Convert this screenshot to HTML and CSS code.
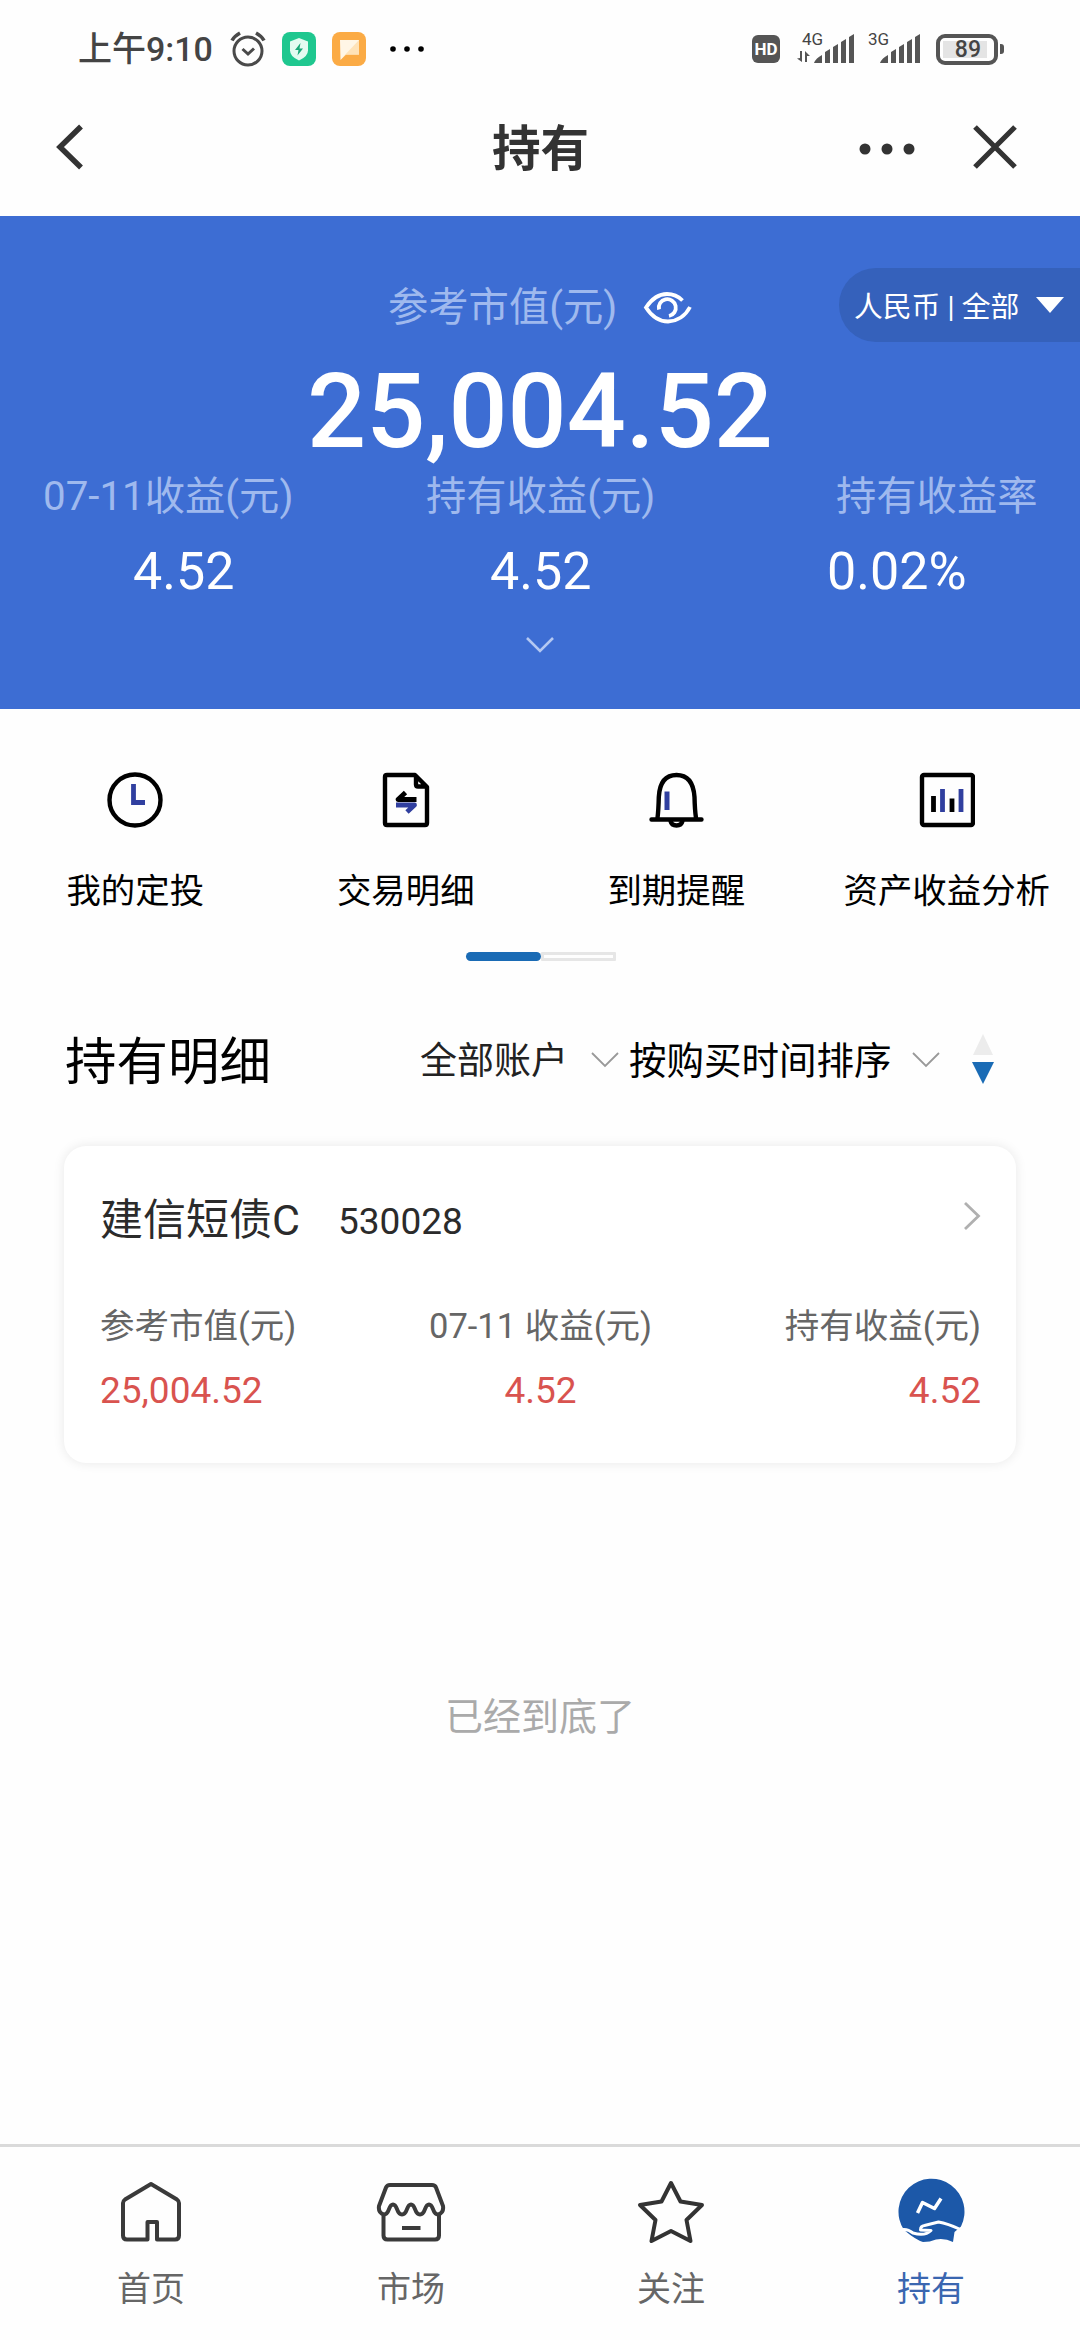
FILE: index.html
```html
<!DOCTYPE html>
<html lang="zh-CN">
<head>
<meta charset="utf-8">
<title>持有</title>
<link rel="stylesheet" href="styles.css">
</head>
<body>
<div class="screen">
  <div class="status">
    <span class="time">上午9:10</span>
    <svg class="alarm" width="36" height="36" viewBox="0 0 36 36" fill="none" stroke="#4a4a4a" stroke-width="3"><circle cx="18" cy="20" r="14"/><path d="M12.500 18l5.500 5 6-5.500" /><path d="M2 9.500Q4.500 5 10 2M34 9.500Q31.500 5 26 2" stroke-width="3.600"/></svg>
    <svg class="guard" width="34" height="34" viewBox="0 0 34 34"><rect width="34" height="34" rx="8" fill="#1fc78f"/><path d="M17 6l9 3.500v9q0 6-9 10-9-4-9-10v-9z" fill="#e4fbf1"/><path d="M18.500 11l-5.500 7h3.500l-1 5.500 5.500-7h-3.500z" fill="#1aa878"/></svg>
    <svg class="chat" width="34" height="34" viewBox="0 0 34 34"><rect width="34" height="34" rx="8" fill="#fbab45"/><path d="M8 8h19v14.500H14L8.500 28z" fill="#fff6e6"/><path d="M27 8v14.500H14L10 26z" fill="#ffe3b8"/></svg>
    <svg class="more" width="34" height="8" viewBox="0 0 34 8"><circle cx="3" cy="4" r="2.800"/><circle cx="17" cy="4" r="2.800"/><circle cx="31" cy="4" r="2.800"/></svg>
    <span class="hd">HD</span>
    <div class="net net-a"><span class="gen">4G</span>
      <svg width="58" height="30" viewBox="0 0 58 30" fill="#555"><path d="M0 24.500l5 3.500V17H3v7zM8 28V17l5 5h-3v6zM17 29q2-5 8-8v8zM28 29V18l5-3v14zM36 29V13l5-3v19zM44 29V8l5-3v24zM52 29V3l5-3v29z"/></svg></div>
    <div class="net net-b"><span class="gen">3G</span>
      <svg width="58" height="30" viewBox="0 0 58 30" fill="#555"><path d="M17 29q2-5 8-8v8zM28 29V18l5-3v14zM36 29V13l5-3v19zM44 29V8l5-3v24zM52 29V3l5-3v29z"/></svg></div>
    <span class="battery"><span class="level">89</span></span><span class="nub"></span>
  </div>

  <header class="nav">
    <svg class="back" width="28" height="46" viewBox="0 0 28 46" fill="none" stroke="#333" stroke-width="5.500"><path d="M25 2.500L4 23l21 20.500"/></svg>
    <h1>持有</h1>
    <svg class="dots" width="56" height="12" viewBox="0 0 56 12" fill="#333"><circle cx="6" cy="6" r="5.500"/><circle cx="28" cy="6" r="5.500"/><circle cx="50" cy="6" r="5.500"/></svg>
    <svg class="close" width="44" height="44" viewBox="0 0 44 44" stroke="#333" stroke-width="5.200"><path d="M2 2l40 40M42 2L2 42"/></svg>
  </header>

  <section class="summary">
    <div class="total-label"><span>参考市值(元)</span>
      <svg width="50" height="32" viewBox="0 0 50 32" fill="none" stroke="#fff" stroke-width="3.800"><path d="M39.500 8.500Q33 2 24 2 12 2 3 15.500 12 29.500 25 29.500q15-1 22-14.500"/><path d="M16 17.500a8.500 8.500 0 1 1 10 6.500"/></svg>
    </div>
    <div class="currency"><span>人民币 | 全部</span><i class="tri"></i></div>
    <div class="total">25,004.52</div>
    <div class="metrics">
      <div class="metric m1"><span>07-11收益(元)</span><b>4.52</b></div>
      <div class="metric m2"><span>持有收益(元)</span><b>4.52</b></div>
      <div class="metric m3"><span>持有收益率</span><b>0.02%</b></div>
    </div>
    <svg class="expand" width="30" height="18" viewBox="0 0 30 18" fill="none" stroke="#b4c8f2" stroke-width="2.600"><path d="M2 2l13 13L28 2"/></svg>
  </section>

  <nav class="shortcuts">
    <a><svg width="56" height="56" viewBox="0 0 56 56" fill="none" stroke="#000" stroke-width="4.400"><circle cx="28" cy="28" r="25.500"/><path d="M26.500 12v18.500H38" stroke="#303f9f" stroke-width="4.800"/></svg>我的定投</a>
    <a><svg width="56" height="56" viewBox="0 0 56 56" fill="none" stroke="#000" stroke-width="4.400" stroke-linejoin="round"><path d="M37 3H9Q7 3 7 5v46q0 2 2 2h38q2 0 2-2V15zM38 4v8.500q0 2 2 2h8"/><path d="M38.500 27.500H20l7.500-7" stroke-width="4.800"/><path d="M18 33h18.500l-7.500 7" stroke="#303f9f" stroke-width="4.800"/></svg>交易明细</a>
    <a><svg width="56" height="56" viewBox="0 0 56 56" fill="none" stroke="#000" stroke-width="4.400" stroke-linecap="round"><path d="M3.500 47.500h50M9.500 46q1-8 1.300-21Q12 3 28.500 3T46.500 25q.3 13 1.500 21M22.500 49q1 4.500 6 4.500t6-4.500"/><path d="M19 19.500V38" stroke="#303f9f" stroke-width="5" stroke-linecap="butt"/></svg>到期提醒</a>
    <a><svg width="56" height="56" viewBox="0 0 56 56" fill="none" stroke="#000" stroke-width="4.400"><rect x="3" y="3" width="51" height="50" rx="2"/><path d="M14.500 24v16M33 26.500V40" stroke-width="4.800"/><path d="M23.500 17v23M42 17v23" stroke="#303f9f" stroke-width="4.800"/></svg>资产收益分析</a>
  </nav>
  <div class="pager"><i></i><i></i></div>

  <div class="list-head">
    <h2>持有明细</h2>
    <span class="filter">全部账户</span>
    <svg class="chev c1" width="28" height="16" viewBox="0 0 28 16"><path d="M1 1l13 13L27 1"/></svg>
    <span class="sort">按购买时间排序</span>
    <svg class="chev c2" width="28" height="16" viewBox="0 0 28 16"><path d="M1 1l13 13L27 1"/></svg>
    <svg class="order" width="22" height="50" viewBox="0 0 22 50"><path d="M11 0l10 21H1z" fill="#ececec"/><path d="M0 28h22L11 50z" fill="#1a6bb5"/></svg>
  </div>

  <article class="card">
    <div class="fund"><span class="name">建信短债C</span><span class="code">530028</span>
      <svg width="18" height="30" viewBox="0 0 18 30" fill="none" stroke="#b0b0b0" stroke-width="2.800"><path d="M2 2l13.500 13L2 28"/></svg></div>
    <div class="cells">
      <div><span>参考市值(元)</span><b>25,004.52</b></div>
      <div><span>07-11 收益(元)</span><b>4.52</b></div>
      <div><span>持有收益(元)</span><b>4.52</b></div>
    </div>
  </article>
  <p class="end">已经到底了</p>

  <footer class="tabs">
    <a><svg width="70" height="66" viewBox="0 0 70 66" fill="none" stroke="#3a3a3a" stroke-width="4" stroke-linejoin="round"><path d="M31.500 61.500H11q-4 0-4-4V25q0-2 2-3.500L35 6l26 15.500q2 1.500 2 3.500v32.500q0 4-4 4H41V44h-9.500z"/></svg>首页</a>
    <a><svg width="70" height="66" viewBox="0 0 70 66" fill="none" stroke="#3a3a3a" stroke-width="4"><path d="M14 7h42q3 0 4 2.500L67 28q1 7-5 8.500c-6 0-4-10-9-10s-3 10-9 10-4-10-9-10-3 10-9 10-4-10-9-10-3 10-9 10Q2 35 3 28l7-18.500Q11 7 14 7z"/><path d="M7.500 36v21.500q0 4 4 4h47.500q4 0 4-4V36M26 50h18.500"/></svg>市场</a>
    <a><svg width="70" height="66" viewBox="0 0 70 66" fill="none" stroke="#333" stroke-width="4" stroke-linejoin="round"><path d="M35 5l9.500 18.500L66 27 50.500 42 54.500 63 35 53 15.500 63l4-21L4 27l21.500-3.500z"/></svg>关注</a>
    <a class="active"><svg width="70" height="66" viewBox="0 0 70 66" fill="none"><path d="M8 52A33 33 0 1 1 65 48.500L58.500 54 57 64q-8-4-17-2.500-6 2.500-13 2.500-7-2-19-12z" fill="#1c58a8"/><path d="M21.500 35l5-10.500 12 6L45 20.500" stroke="#fff" stroke-width="3.500" stroke-linejoin="round"/><path d="M7 51.500q5-.5 10 3.500 12 3.500 18-2.500l-10.500-.5q0-4 4-4.500l14-3.500q9 1.500 22 7.500" stroke="#fff" stroke-width="3" stroke-linejoin="round"/></svg>持有</a>
  </footer>
</div>
</body>
</html>
```
FILE: styles.css
```css
* { box-sizing: border-box; }
body { margin: 0; background: #fefefe; font-family: Roboto, "Noto Sans CJK SC", sans-serif; }
svg { display: block; flex: none; }
b, h1, h2, p { margin: 0; font-weight: 400; }
span, h1 { white-space: nowrap; }
.screen { width: 1080px; height: 2340px; display: flex; flex-direction: column; background: #fefefe; overflow: hidden; }

.status { height: 98px; display: flex; align-items: center; padding-left: 78px; color: #444; flex: none; }
.time { font-size: 34px; width: 152px; flex: none; font-weight: 500; line-height: 40px; }
.alarm { margin-right: 16px; }
.guard { margin-right: 16px; }
.chat { margin-right: 24px; }
.hd { margin-left: 328px; width: 28px; height: 28px; border-radius: 6px; background: #555; color: #fff; font: 700 17px/29px Roboto, sans-serif; text-align: center; }
.net { position: relative; width: 58px; }
.net-a { margin-left: 17px; }
.net-b { margin-left: 8px; }
.gen { position: absolute; left: 5px; top: -5px; font-size: 17px; line-height: 20px; }
.battery { margin-left: 15px; width: 62px; height: 31px; border: 4px solid #555; border-radius: 9px; padding: 3px; }
.level { display: block; width: 44px; height: 17px; background: #e4e4e4; font-size: 23px; line-height: 18px; font-weight: 500; text-align: right; padding-right: 6px; }
.nub { width: 4px; height: 10px; margin-left: 2px; background: #555; border-radius: 0 3px 3px 0; }

.nav { height: 118px; display: flex; align-items: center; padding: 0 0 20px 56px; flex: none; color: #333; }
.nav h1 { font-size: 48.500px; font-weight: 700; line-height: 60px; margin: 6px 0 0 408px; width: 97px; }
.dots { margin-left: 270px; margin-top: 3px; }
.close { margin-left: 58px; }

.summary { position: relative; height: 493px; background: #3d6dd3; color: #fff; flex: none; display: flex; flex-direction: column; }
.total-label { display: flex; align-items: center; gap: 26px; height: 60px; margin: 60px 0 0 388px; font-size: 40.300px; color: #9fb9ee; }
.total-label span { margin-top: -6px; }
.total-label svg { margin-top: 3px; }
.currency { position: absolute; right: 0; top: 52px; width: 241px; height: 74px; border-radius: 37px 0 0 37px; background: #3561bb; display: flex; align-items: center; padding-left: 15px; font-size: 28.800px; }
.currency span { margin-top: -2px; }
.tri { margin-left: 17px; border: 14px solid transparent; border-top: 16px solid #fff; border-bottom: 0; }
.total { height: 122px; line-height: 122px; margin-top: 15px; text-align: center; font-size: 104px; font-weight: 500; }
.metrics { display: flex; margin-top: -6px; padding-left: 43px; }
.metric { display: flex; flex-direction: column; }
.metric span { font-size: 40.300px; line-height: 60px; color: #9fb9ee; }
.metric b { font-size: 52px; line-height: 60px; margin-top: 15px; }
.m1 { width: 383px; }
.m2 { width: 410px; }
.m1 b { padding-left: 90px; }
.m2 b { padding-left: 64px; }
.m3 b { margin-left: -9px; }
.expand { margin: 34px auto 0; }

.shortcuts { display: grid; grid-template-columns: repeat(4, 270.500px); margin-top: 63px; height: 180px; flex: none; }
.shortcuts a { display: flex; flex-direction: column; align-items: center; gap: 38px; font-size: 34.400px; line-height: 50px; color: #000; white-space: nowrap; }
.pager { display: flex; margin-left: 466px; height: 9px; flex: none; }
.pager i { width: 75px; border-radius: 5px; background: #1a6bb5; }
.pager i + i { background: #fefefe; border: 3px solid #e6e6e6; border-radius: 1px; }

.list-head { height: 100px; margin-top: 46px; padding-left: 65px; display: flex; align-items: center; flex: none; }
.list-head h2 { font-size: 51.500px; width: 355px; white-space: nowrap; }
.filter { font-size: 37px; width: 171px; margin-top: 2px; color: #222; }
.sort { font-size: 37.500px; width: 283px; margin-left: 10px; }
.chev { fill: none; stroke: #999; stroke-width: 1.800; margin-top: 5px; }
.order { margin-left: 32px; margin-top: 4px; }

.card { margin: 39px 64px 0; height: 317px; border-radius: 22px; background: #fff; box-shadow: 0 0 12px rgba(0,0,0,.09); padding: 42px 35px 0 36px; flex: none; }
.fund { display: flex; align-items: center; height: 60px; color: #2b2b2b; }
.name { font-size: 43px; width: 238px; margin-top: -5px; }
.code { font-size: 37px; flex: 1; margin-top: 6px; }
.fund svg { margin-top: -4px; }
.cells { display: flex; justify-content: space-between; margin-top: 52px; }
.cells div { display: flex; flex-direction: column; align-items: center; }
.cells div:first-child { align-items: flex-start; }
.cells div:last-child { align-items: flex-end; }
.cells span { font-size: 34.500px; line-height: 52px; color: #666; }
.cells b { font-size: 37px; line-height: 44px; margin-top: 17px; color: #d9534f; }
.end { margin-top: 226px; text-align: center; font-size: 38px; line-height: 56px; color: #aaa; }

.tabs { margin-top: auto; height: 196px; border-top: 3px solid #dadada; padding: 31px 19px 0 21px; display: grid; grid-template-columns: repeat(4, 1fr); flex: none; }
.tabs a { display: flex; flex-direction: column; align-items: center; gap: 20px; font-size: 34px; line-height: 50px; color: #666; }
.tabs .active { color: #3a66b0; }
```
